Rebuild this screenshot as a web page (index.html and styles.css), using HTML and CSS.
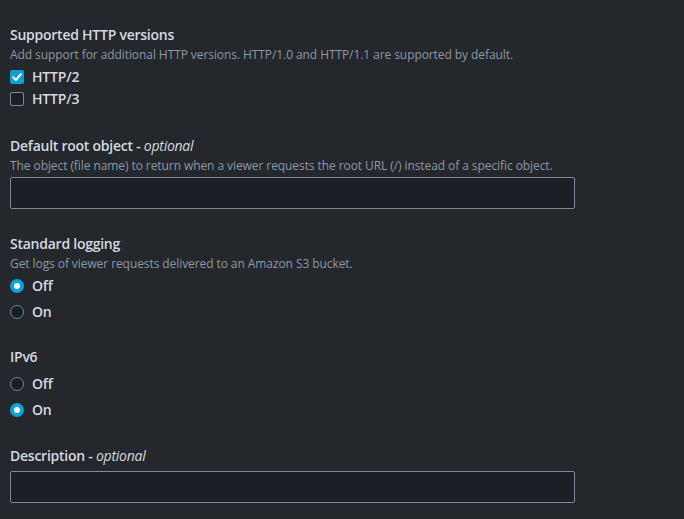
FILE: index.html
```html
<!DOCTYPE html>
<html>
<head>
<meta charset="utf-8">
<link rel="stylesheet" href="styles.css">
</head>
<body>
<div class="form">
  <section class="field pad-4">
    <div class="label">Supported HTTP versions</div>
    <div class="desc">Add support for additional HTTP versions. HTTP/1.0 and HTTP/1.1 are supported by default.</div>
    <div class="options options-check">
      <label class="opt"><span class="box checked"><svg viewBox="0 0 14 14" width="14" height="14"><path d="M3.2 7.3 L5.9 10 L10.9 4.2" fill="none" stroke="#fff" stroke-width="2" stroke-linecap="round" stroke-linejoin="round"/></svg></span><span class="opt-text">HTTP/2</span></label>
      <label class="opt"><span class="box"></span><span class="opt-text">HTTP/3</span></label>
    </div>
  </section>
  <section class="field pad-3">
    <div class="label">Default root object - <i>optional</i></div>
    <div class="desc">The object (file name) to return when a viewer requests the root URL (/) instead of a specific object.</div>
    <div class="input input-after-desc"></div>
  </section>
  <section class="field">
    <div class="label">Standard logging</div>
    <div class="desc">Get logs of viewer requests delivered to an Amazon S3 bucket.</div>
    <div class="options options-radio after-desc">
      <label class="opt"><span class="radio on"></span><span class="opt-text">Off</span></label>
      <label class="opt"><span class="radio"></span><span class="opt-text">On</span></label>
    </div>
  </section>
  <section class="field pad-1">
    <div class="label">IPv6</div>
    <div class="options options-radio after-label">
      <label class="opt"><span class="radio"></span><span class="opt-text">Off</span></label>
      <label class="opt"><span class="radio on"></span><span class="opt-text">On</span></label>
    </div>
  </section>
  <section class="field">
    <div class="label">Description - <i>optional</i></div>
    <div class="input input-after-label"></div>
  </section>
</div>
</body>
</html>
```
FILE: styles.css
```css
html, body {
  margin: 0;
  padding: 0;
  background: #24272b;
}
body {
  font-family: "Open Sans", "Noto Sans", sans-serif;
  color: #d1d5db;
  width: 684px;
  height: 519px;
  overflow: hidden;
}
.form {
  padding: 25px 10px 0 10px;
  display: flex;
  flex-direction: column;
  gap: 22px;
}
.field {
  display: flex;
  flex-direction: column;
}
.pad-4 { padding-bottom: 4px; }
.pad-3 { padding-bottom: 3px; }
.pad-1 { padding-bottom: 1px; }
.label {
  font-size: 14px;
  font-weight: 600;
  line-height: 20px;
  color: #d5dae0;
  letter-spacing: -0.25px;
}
.label i {
  font-weight: 500;
}
.desc {
  font-size: 12px;
  line-height: 20px;
  color: #8d99a8;
  letter-spacing: -0.08px;
}
.options {
  display: flex;
  flex-direction: column;
}
.options-check {
  margin-top: 1px;
}
.options-check .opt {
  height: 22px;
}
.options-radio .opt {
  height: 26px;
}
.options-radio.after-desc {
  margin-top: -1px;
}
.options-radio.after-label {
  margin-top: 4px;
}
.opt {
  display: flex;
  align-items: center;
  gap: 8px;
  font-size: 14px;
  font-weight: 600;
  letter-spacing: -0.2px;
  color: #d5dae0;
}
.opt-text {
  line-height: 18px;
}
.box {
  width: 14px;
  height: 14px;
  box-sizing: border-box;
  border: 1.5px solid #7d8998;
  border-radius: 2px;
  background: #1a1e25;
  display: block;
}
.box.checked {
  border: none;
  background: #0aa0d8;
}
.box svg {
  display: block;
}
.radio {
  width: 14px;
  height: 14px;
  box-sizing: border-box;
  border-radius: 50%;
  border: 1.5px solid #7d8998;
  background: #1a1e25;
  display: block;
}
.radio.on {
  border: 4px solid #0aa0d8;
  background: #fff;
}
.input {
  width: 565px;
  height: 32px;
  box-sizing: border-box;
  border: 1px solid #7d8998;
  border-radius: 2px;
  background: #1b1f26;
}
.input-after-desc {
  margin-top: 1px;
}
.input-after-label {
  margin-top: 5px;
}
```
